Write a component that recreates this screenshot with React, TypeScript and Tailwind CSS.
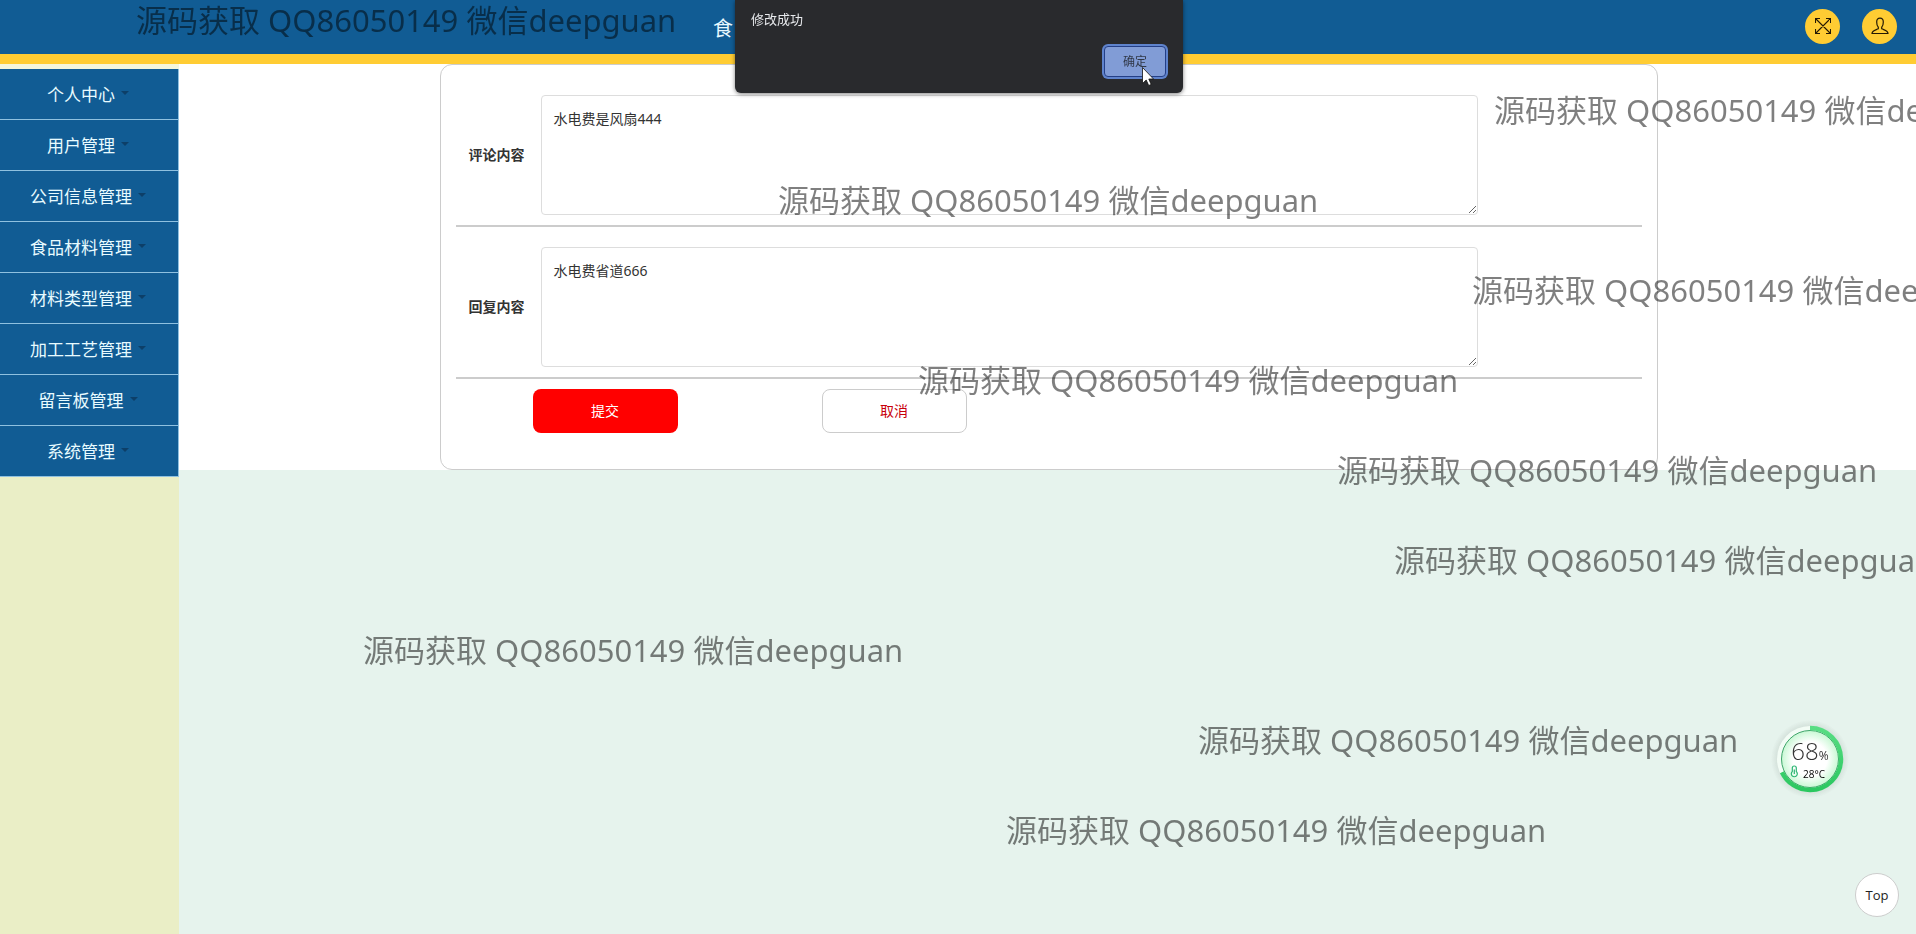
import React from 'react';

const menuItems = [
  '个人中心',
  '用户管理',
  '公司信息管理',
  '食品材料管理',
  '材料类型管理',
  '加工工艺管理',
  '留言板管理',
  '系统管理',
];

const fields = [
  { id: 'comment', label: '评论内容', value: '水电费是风扇444' },
  { id: 'reply', label: '回复内容', value: '水电费省道666' },
];

const watermarks = [
  'left-[136px] top-[0px]',
  'left-[1494px] top-[90px]',
  'left-[778px] top-[180px]',
  'left-[1472px] top-[270px]',
  'left-[918px] top-[360px]',
  'left-[1337px] top-[450px]',
  'left-[1394px] top-[540px]',
  'left-[363px] top-[630px]',
  'left-[1198px] top-[720px]',
  'left-[1006px] top-[810px]',
];

function ExpandIcon() {
  return (
    <svg viewBox="0 0 16 16" className="size-4" fill="none" stroke="#241804" strokeWidth="1.1">
      <path d="M1 1 15 15M15 1 1 15M.5 5V.5H5M11 .5H15.500V5M15.500 11V15.500H11M5 15.500H.5V11" />
    </svg>
  );
}

function UserIcon() {
  return (
    <svg viewBox="0 0 18 18" className="size-[18px]" fill="none" stroke="#241804" strokeWidth="1.2">
      <path d="M7.300 10.300C6.200 9.300 5.700 7.500 5.700 5C5.700 2.500 6.900 1.100 9 1.100S12.300 2.500 12.300 5C12.300 7.500 11.800 9.300 10.700 10.300V11.800C14 13.300 17 13.800 17 16.500H1C1 13.800 4 13.300 7.300 11.800Z" />
    </svg>
  );
}

function Gauge() {
  return (
    <div className="fixed top-[718px] right-[66px] size-20">
      <svg viewBox="0 0 80 80" className="absolute inset-0 size-20">
        <defs>
          <radialGradient id="halo">
            <stop offset="0.75" stopColor="#9aa8a0" stopOpacity="0.35" />
            <stop offset="1" stopColor="#9aa8a0" stopOpacity="0" />
          </radialGradient>
          <radialGradient id="face">
            <stop offset="0.6" stopColor="#ffffff" />
            <stop offset="1" stopColor="#c8f8d4" />
          </radialGradient>
          <linearGradient id="ring" x1="1" y1="0" x2="0" y2="0">
            <stop offset="0" stopColor="#58dd83" />
            <stop offset="1" stopColor="#2bc760" />
          </linearGradient>
        </defs>
        <circle cx="40" cy="41" r="39" fill="url(#halo)" />
        <circle cx="40" cy="41" r="33" fill="#f2fcf5" />
        <circle cx="40" cy="41" r="28.500" fill="url(#face)" stroke="#3fa56a" strokeWidth="1" />
        <circle
          cx="40"
          cy="41"
          r="31"
          fill="none"
          stroke="url(#ring)"
          strokeWidth="4.500"
          pathLength="100"
          strokeDasharray="68 32"
          transform="rotate(-90 40 41)"
        />
        <path
          d="M22.300 50a2 2 0 0 1 4 0v3.500a3 3 0 1 1-4 0zM24.300 51.500v4.500"
          fill="none"
          stroke="#2bb673"
          strokeWidth="1.200"
        />
      </svg>
      <div className="relative flex flex-col pt-[21px] font-['Open_Sans',sans-serif] text-[#333]">
        <div className="flex items-baseline justify-center leading-6">
          <span className="text-2xl leading-6 font-light">68</span>
          <span className="text-xs leading-6">%</span>
        </div>
        <span className="pl-[33px] text-[10px] leading-3 text-black">28°C</span>
      </div>
    </div>
  );
}

export default function App() {
  return (
    <div className="flex min-h-screen flex-col overflow-hidden bg-[#e6f3ed] font-['Noto_Sans','Noto_Sans_CJK_SC',sans-serif] text-sm text-[#333]">
      <header className="flex h-16 items-center border-b-10 border-[#ffcc33] bg-[#115c94] pr-[19px]">
        <h1 className="flex-1 pt-1 pl-[713px] text-xl whitespace-nowrap text-[#e8f8ff]">食</h1>
        <div className="flex gap-[22px] pb-0.5">
          <button aria-label="全屏" className="flex size-[35px] items-center justify-center rounded-full bg-[#ffcc33]">
            <ExpandIcon />
          </button>
          <button aria-label="用户" className="flex size-[35px] items-center justify-center rounded-full bg-[#ffcc33]">
            <UserIcon />
          </button>
        </div>
      </header>

      <div className="flex flex-1">
        <nav className="w-[179px] shrink-0 border-t-5 border-[#f4f6dc] bg-[#eaeec6]">
          <ul>
            {menuItems.map((item) => (
              <li key={item} className="border-r border-b border-[#8fc1e0] bg-[#115c94]">
                <a href="#" className="flex h-[50px] items-center justify-center gap-1.5 pt-0.5 pr-0.5 text-[17px] text-[#e8fbff]">
                  {item}
                  <span className="mb-1 border-x-4 border-t-4 border-x-transparent border-t-[#0d3f68]" />
                </a>
              </li>
            ))}
          </ul>
        </nav>

        <main className="flex-1">
          <div className="bg-white">
            <form className="ml-[15%] w-[calc(70%+3px)] rounded-xl border border-[#ccc] px-[15px] pt-[10px] pb-9">
              {fields.map((field) => (
                <div key={field.id} className="flex items-center border-b-2 border-[#ccc] pt-5 pb-2.5">
                  <label htmlFor={field.id} className="w-[85px] shrink-0 pr-4 text-right font-bold">
                    {field.label}
                  </label>
                  <textarea
                    id={field.id}
                    defaultValue={field.value}
                    className="block h-[120px] w-[79%] resize rounded border border-[#ddd] px-3 py-3 text-sm leading-[22px] outline-none"
                  />
                </div>
              ))}
              <div className="flex gap-36 pt-2.5 pl-[77px]">
                <button type="submit" className="h-11 w-[145px] rounded-lg bg-[#ff0000] text-[#fff]">
                  提交
                </button>
                <button type="button" className="h-11 w-[145px] rounded-lg border border-[#ccc] bg-white text-[#c8000a]">
                  取消
                </button>
              </div>
            </form>
          </div>
        </main>
      </div>

      <button className="fixed right-[17px] bottom-[17px] size-11 rounded-full border border-[#ccc] bg-white font-['Open_Sans',sans-serif] text-[13px] text-[#222]">
        Top
      </button>
      <Gauge />

      <div aria-hidden="true" className="pointer-events-none fixed inset-0 overflow-hidden">
        {watermarks.map((place) => (
          <span key={place} className={`absolute text-[31px] leading-10 whitespace-nowrap text-black/50 ${place}`}>
            源码获取 QQ86050149 微信deepguan
          </span>
        ))}
      </div>

      <div
        role="alertdialog"
        aria-labelledby="dialog-message"
        className="fixed top-0 left-[735px] flex h-[93px] w-[448px] flex-col justify-between rounded-b-md bg-[#292a2d] pt-2 pr-[17px] pb-4 pl-4 shadow-[0_1px_4px_rgba(0,0,0,0.5)]"
      >
        <p id="dialog-message" className="text-[13px] leading-[22px] text-[#e8eaed]">
          修改成功
        </p>
        <button className="h-[31px] w-[62px] self-end rounded border border-[#243f86] bg-[#819cd6] text-xs text-[#303848] ring-2 ring-[#5f83cc]">
          确定
        </button>
        <svg viewBox="0 0 12 19" className="absolute top-[67px] left-[407px] h-[19px] w-3">
          <path d="M.5.500V16.500L4.200 13 6.700 18.500 9.200 17.400 6.800 12H11.500Z" fill="#fff" stroke="#111" strokeWidth="0.800" />
        </svg>
      </div>
    </div>
  );
}
